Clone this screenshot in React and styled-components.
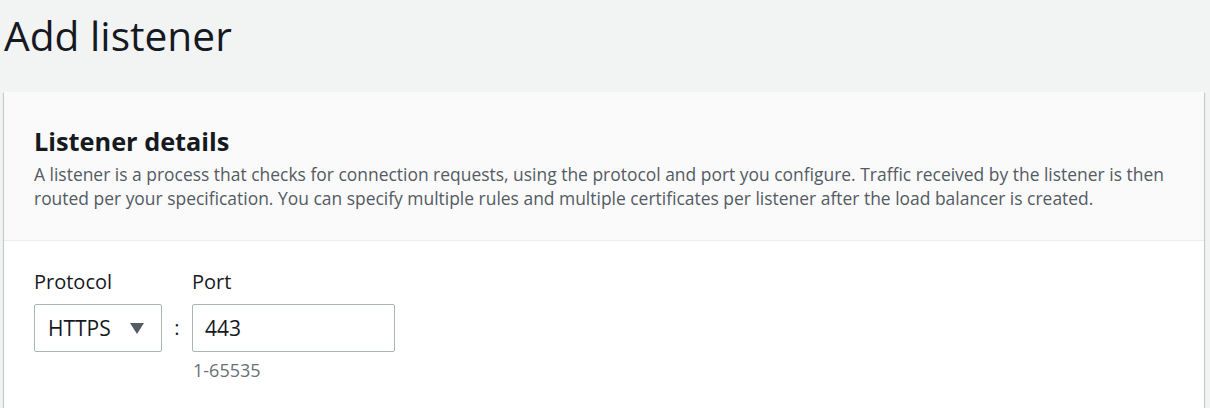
import React from 'react'
import styled, { createGlobalStyle } from 'styled-components'

const GlobalStyle = createGlobalStyle`
    html, body {
        margin: 0;
        height: 408px;
        overflow: hidden;
    }
    body {
        background: #f2f3f3;
        font-family: "Open Sans", "Noto Sans", Arial, sans-serif;
        color: #16191f;
    }
`;

const Page = styled.div`
    padding: 12px 3px 0 4px;
`;

const Title = styled.h1`
    margin: 0 0 34px 0;
    font-size: 40.7px;
    font-weight: 400;
    line-height: 46px;
    color: #16191f;
`;

const Card = styled.div`
    width: 1200px;
    background: #ffffff;
    box-shadow: 0 1px 1px 0 rgba(0, 28, 36, 0.3), 1px 1px 1px 0 rgba(0, 28, 36, 0.15), -1px 1px 1px 0 rgba(0, 28, 36, 0.15);
`;

const CardHeader = styled.div`
    background: #f9faf9;
    border-bottom: 1px solid #eaeded;
    padding: 34px 30px 30px 30px;
`;

const Heading = styled.h2`
    margin: 0 0 6px 0;
    font-size: 25.3px;
    line-height: 30px;
    font-weight: 700;
    color: #16191f;
`;

const Description = styled.p`
    margin: 0;
    font-size: 17.45px;
    line-height: 24px;
    color: #545b64;
`;

const CardBody = styled.div`
    box-sizing: border-box;
    padding: 30px 30px 0 30px;
    height: 167px;
`;

const FieldRow = styled.div`
    display: flex;
    align-items: flex-start;
`;

const Field = styled.div`
    display: flex;
    flex-direction: column;
`;

const Label = styled.label`
    font-size: 20px;
    line-height: 22px;
    margin-bottom: 11px;
    color: #16191f;
`;

const Select = styled.div`
    box-sizing: border-box;
    width: 128px;
    height: 48px;
    border: 1px solid #aab7b8;
    border-radius: 2px;
    display: flex;
    align-items: center;
    justify-content: space-between;
    padding: 0 17px 0 13px;
    font-size: 21px;
    background: #fff;
`;

const Caret = styled.span`
    width: 0;
    height: 0;
    margin-top: 1px;
    border-left: 7.5px solid transparent;
    border-right: 7.5px solid transparent;
    border-top: 11px solid #545b64;
`;

const Colon = styled.div`
    width: 30px;
    text-align: center;
    font-size: 20px;
    line-height: 48px;
    margin-top: 33px;
    color: #16191f;
`;

const Input = styled.div`
    box-sizing: border-box;
    width: 203px;
    height: 48px;
    border: 1px solid #aab7b8;
    border-radius: 2px;
    display: flex;
    align-items: center;
    padding: 0 12px;
    font-size: 21px;
    background: #fff;
`;

const Hint = styled.div`
    margin-top: 8px;
    padding-left: 1px;
    font-size: 18px;
    line-height: 20px;
    color: #687078;
`;

const App = () => {
    return (
        <>
            <GlobalStyle />
            <Page>
                <Title>Add listener</Title>
                <Card>
                    <CardHeader>
                        <Heading>Listener details</Heading>
                        <Description>
                            A listener is a process that checks for connection requests, using the protocol and port you configure. Traffic received by the listener is then routed per your specification. You can specify multiple rules and multiple certificates per listener after the load balancer is created.
                        </Description>
                    </CardHeader>
                    <CardBody>
                        <FieldRow>
                            <Field>
                                <Label>Protocol</Label>
                                <Select>
                                    HTTPS
                                    <Caret />
                                </Select>
                            </Field>
                            <Colon>:</Colon>
                            <Field>
                                <Label>Port</Label>
                                <Input>443</Input>
                                <Hint>1-65535</Hint>
                            </Field>
                        </FieldRow>
                    </CardBody>
                </Card>
            </Page>
        </>
    )
}

export default App
